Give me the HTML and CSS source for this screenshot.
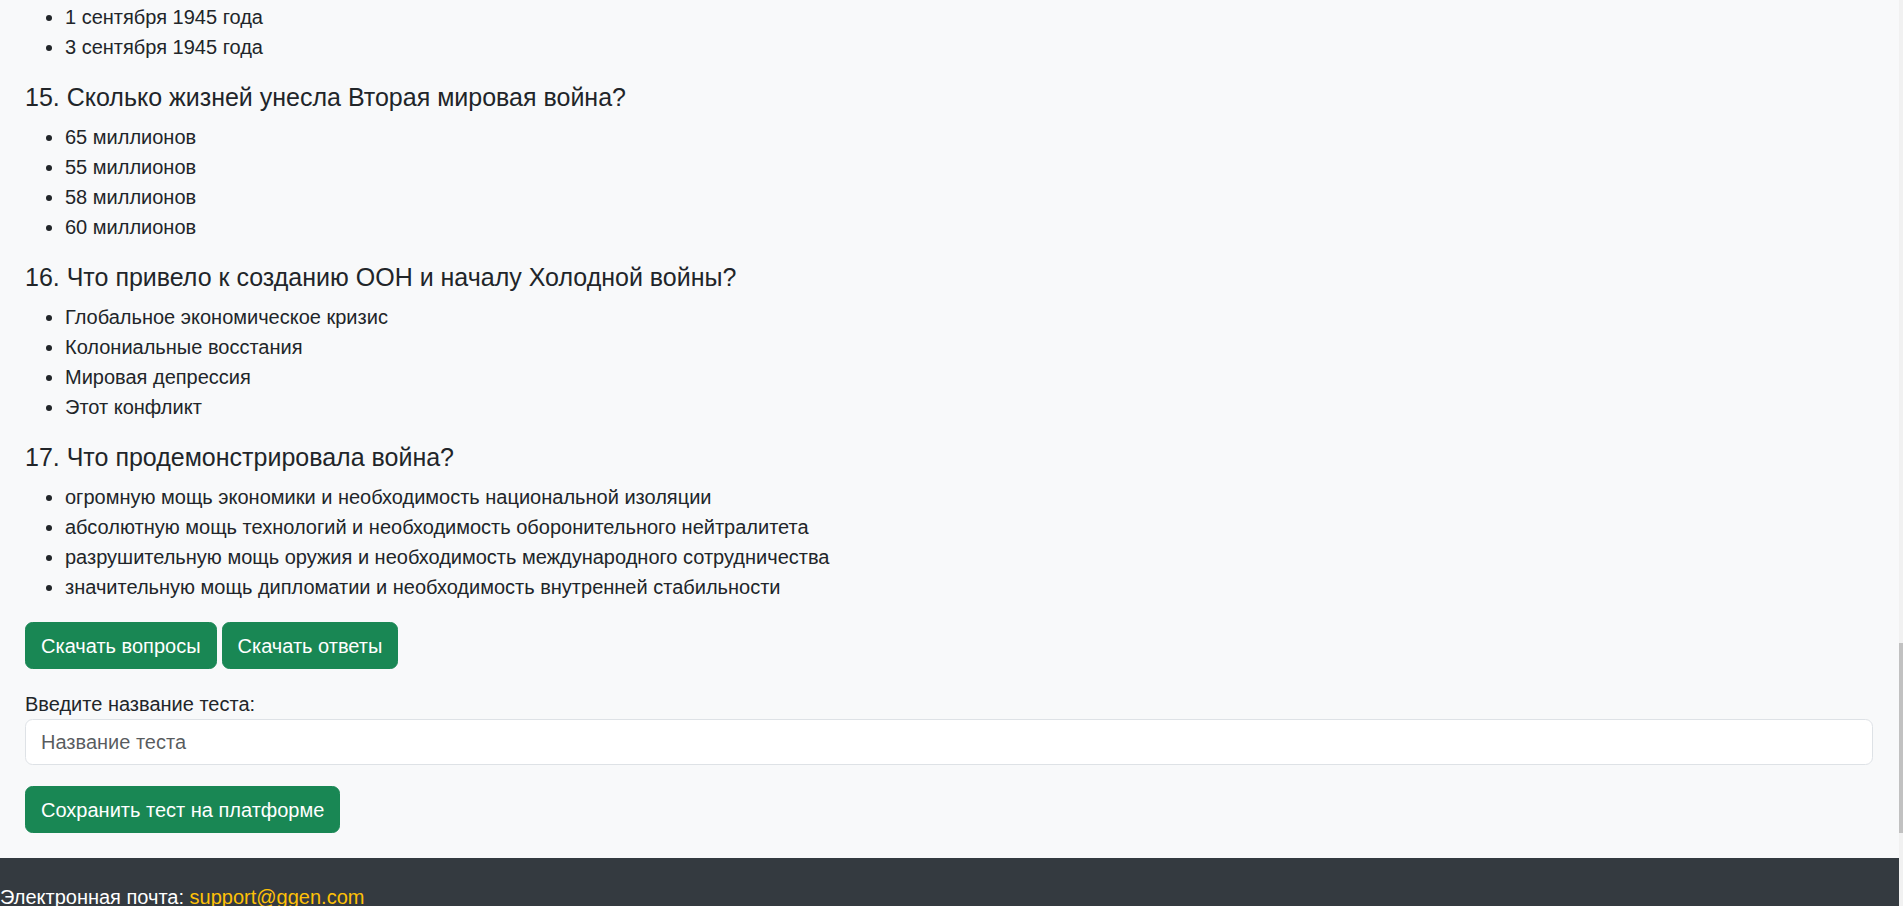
FILE: index.html
```html
<!DOCTYPE html>
<html lang="ru">
<head>
<meta charset="utf-8">
<title>Тест</title>
<link rel="stylesheet" href="styles.css">
</head>
<body>
<div class="layout">
  <div class="page">
    <main class="content">
      <ul class="answers first">
        <li>1 сентября 1945 года</li>
        <li>3 сентября 1945 года</li>
      </ul>

      <h5 class="question">15. Сколько жизней унесла Вторая мировая война?</h5>
      <ul class="answers">
        <li>65 миллионов</li>
        <li>55 миллионов</li>
        <li>58 миллионов</li>
        <li>60 миллионов</li>
      </ul>

      <h5 class="question">16. Что привело к созданию ООН и началу Холодной войны?</h5>
      <ul class="answers">
        <li>Глобальное экономическое кризис</li>
        <li>Колониальные восстания</li>
        <li>Мировая депрессия</li>
        <li>Этот конфликт</li>
      </ul>

      <h5 class="question">17. Что продемонстрировала война?</h5>
      <ul class="answers">
        <li>огромную мощь экономики и необходимость национальной изоляции</li>
        <li>абсолютную мощь технологий и необходимость оборонительного нейтралитета</li>
        <li>разрушительную мощь оружия и необходимость международного сотрудничества</li>
        <li>значительную мощь дипломатии и необходимость внутренней стабильности</li>
      </ul>

      <div class="btn-row">
        <button class="btn">Скачать вопросы</button>
        <button class="btn">Скачать ответы</button>
      </div>

      <label class="field-label" for="test-name">Введите название теста:</label>
      <input class="field" id="test-name" type="text" placeholder="Название теста">

      <div class="save-row">
        <button class="btn">Сохранить тест на платформе</button>
      </div>
    </main>

    <footer class="footer">
      <p class="footer-line">Электронная почта: <a class="footer-link" href="#">support@ggen.com</a></p>
    </footer>
  </div>
  <div class="scrollbar"><div class="thumb"></div></div>
</div>
</body>
</html>
```

FILE: styles.css
```css
html, body {
  margin: 0;
  padding: 0;
  height: 100%;
  overflow: hidden;
}

body {
  font-family: "Liberation Sans", Arial, sans-serif;
  font-size: 20px;
  line-height: 1.5;
  color: #212529;
  background: #f8f9fa;
}

.layout {
  display: flex;
  min-height: 100%;
}

.page {
  flex: 1;
  display: flex;
  flex-direction: column;
}

.content {
  padding: 2px 26px 25px 25px;
}

.answers {
  margin: 0 0 20px;
  padding-left: 40px;
}

.question {
  font-size: 25px;
  font-weight: 500;
  line-height: 1.2;
  margin: 0 0 10px;
}

.btn-row {
  display: flex;
  gap: 5px;
  margin-bottom: 20px;
}

.btn {
  font-family: inherit;
  font-size: 20px;
  line-height: 30px;
  color: #fff;
  background: #198754;
  border: 1px solid #198754;
  border-radius: 7.5px;
  padding: 7.5px 15px;
  cursor: pointer;
}

.field-label {
  display: block;
}

.field {
  display: block;
  box-sizing: border-box;
  width: 100%;
  height: 46px;
  font-family: inherit;
  font-size: 20px;
  line-height: 30px;
  color: #212529;
  background: #fff;
  border: 1px solid #dee2e6;
  border-radius: 7.5px;
  padding: 7px 15px;
  margin: 0;
}

.field::placeholder {
  color: rgba(33, 37, 41, 0.75);
}

.save-row {
  margin-top: 21px;
}

.footer {
  background: #343a40;
  color: #fff;
  padding: 24px 0;
  flex: 1;
}

.footer-line {
  margin: 0;
}

.footer-link {
  color: #ffc107;
  text-decoration: none;
}

.scrollbar {
  width: 4px;
  background: #f1f1f1;
  padding-top: 643px;
  box-sizing: border-box;
}

.thumb {
  height: 190px;
  background: #c1c1c1;
}
```
